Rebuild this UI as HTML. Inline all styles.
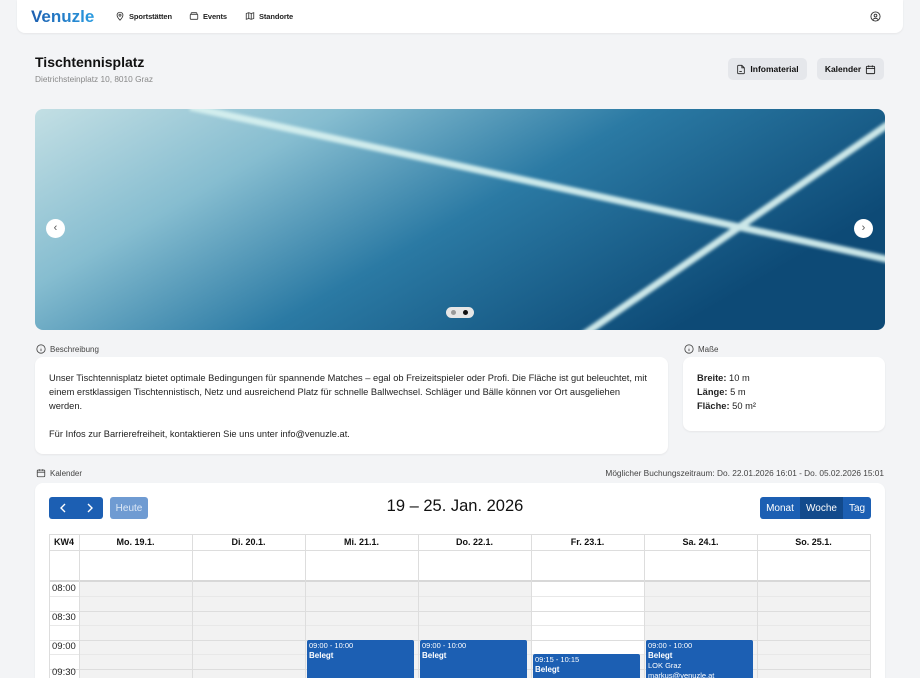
<!DOCTYPE html>
<html><head><meta charset="utf-8">
<style>
*{box-sizing:border-box;margin:0;padding:0}
html,body{width:920px;height:678px;overflow:hidden}
body{background:#f3f4f6;font-family:"Liberation Sans",sans-serif;color:#111;position:relative}
.abs{position:absolute}
.hdr{left:17px;top:0;width:886px;height:33px;background:#fff;border-radius:0 0 8px 8px;box-shadow:0 1px 2px rgba(0,0,0,.06)}
.logo{left:14px;top:7px;font-size:17px;font-weight:bold;background:linear-gradient(90deg,#1d5fb0,#2a9be0);-webkit-background-clip:text;color:transparent}
.nav{top:11px;font-size:7.5px;font-weight:bold;color:#222;display:flex;align-items:center;gap:4px;letter-spacing:-.1px}
.btn{background:#e5e7eb;border-radius:5px;font-size:8.5px;font-weight:bold;display:flex;align-items:center;justify-content:center;gap:4px;color:#111}
.lbl{font-size:8px;color:#444;display:flex;align-items:center;gap:4px}
.card{background:#fff;border-radius:8px;box-shadow:0 1px 2px rgba(0,0,0,.06)}
.p{font-size:9.3px;line-height:14px;color:#222}
.cb{background:#1c5fb3;color:#fff;font-size:10px;display:flex;align-items:center;justify-content:center}
.hl{position:absolute;left:0;width:821px;height:1px;background:#ddd}
.vl{position:absolute;top:0;width:1px;height:144px;background:#ddd}
.dh{position:absolute;top:0;height:16px;font-size:9px;font-weight:bold;text-align:center;line-height:16px}
.tm{position:absolute;left:3px;font-size:9.5px;color:#222}
.ev{position:absolute;background:#1c5fb3;color:#fff;border-radius:2px 2px 0 0;padding:1px 2px;font-size:7.5px;line-height:10px;width:107px;height:38px;overflow:hidden}
.ev b{font-size:8px;display:block}
</style></head><body>
<div class="abs hdr">
  <div class="abs logo">Venuzle</div>
  <div class="abs nav" style="left:98px"><svg width="10" height="10" viewBox="0 0 24 24" fill="none" stroke="#333" stroke-width="2"><path d="M12 22s7-7 7-12a7 7 0 0 0-14 0c0 5 7 12 7 12z"/><circle cx="12" cy="10" r="2.5"/></svg>Sportstätten</div>
  <div class="abs nav" style="left:172px"><svg width="10" height="10" viewBox="0 0 24 24" fill="none" stroke="#333" stroke-width="2"><rect x="3" y="8" width="18" height="12" rx="2"/><path d="M5 8V6a2 2 0 0 1 2-2h10a2 2 0 0 1 2 2v2"/></svg>Events</div>
  <div class="abs nav" style="left:228px"><svg width="10" height="10" viewBox="0 0 24 24" fill="none" stroke="#333" stroke-width="2"><path d="M3 6l6-2 6 2 6-2v14l-6 2-6-2-6 2z M9 4v14 M15 6v14"/></svg>Standorte</div>
  <svg class="abs" style="left:853px;top:11px" width="11" height="11" viewBox="0 0 24 24" fill="none" stroke="#333" stroke-width="2"><circle cx="12" cy="12" r="10"/><circle cx="12" cy="10" r="3"/><path d="M6.5 18.5a7 7 0 0 1 11 0"/></svg>
</div>

<div class="abs" style="left:35px;top:54px;font-size:14px;font-weight:bold">Tischtennisplatz</div>
<div class="abs" style="left:35px;top:74px;font-size:8.3px;color:#888">Dietrichsteinplatz 10, 8010 Graz</div>
<div class="abs btn" style="left:728px;top:58px;width:79px;height:22px"><svg width="10" height="11" viewBox="0 0 24 24" fill="none" stroke="#222" stroke-width="2"><path d="M14 2H6a2 2 0 0 0-2 2v16a2 2 0 0 0 2 2h12a2 2 0 0 0 2-2V8z M14 2v6h6 M8 17h6"/></svg>Infomaterial</div>
<div class="abs btn" style="left:817px;top:58px;width:67px;height:22px">Kalender<svg width="11" height="11" viewBox="0 0 24 24" fill="none" stroke="#222" stroke-width="2"><rect x="3" y="5" width="18" height="16" rx="2"/><path d="M3 10h18 M8 3v4 M16 3v4"/></svg></div>

<div class="abs" style="left:35px;top:109px;width:850px;height:221px;border-radius:8px;overflow:hidden">
<svg width="850" height="221" viewBox="0 0 850 221">
<defs><linearGradient id="g" x1="0" y1="0" x2="1" y2="0.45"><stop offset="0" stop-color="#c3dfe4"/><stop offset="0.3" stop-color="#86bdd0"/><stop offset="0.6" stop-color="#2b7aa4"/><stop offset="1" stop-color="#0d4a76"/></linearGradient>
<filter id="b"><feGaussianBlur stdDeviation="1.5"/></filter></defs>
<rect width="850" height="221" fill="url(#g)"/>
<g filter="url(#b)" stroke="#d6f0ef" stroke-width="7" fill="none" opacity=".95"><path d="M155 -2 L860 152"/><path d="M548 226 L858 12"/></g>
</svg>
<div class="abs" style="left:11px;top:110px;width:19px;height:19px;border-radius:50%;background:#fff;font-size:11px;text-align:center;line-height:18px;color:#555">‹</div>
<div class="abs" style="left:819px;top:110px;width:19px;height:19px;border-radius:50%;background:#fff;font-size:11px;text-align:center;line-height:18px;color:#555">›</div>
<div class="abs" style="left:411px;top:198px;width:28px;height:11px;border-radius:6px;background:#e6e6e6"><span class="abs" style="left:5px;top:3px;width:5px;height:5px;border-radius:50%;background:#999"></span><span class="abs" style="left:17px;top:3px;width:5px;height:5px;border-radius:50%;background:#111"></span></div>
</div>

<div class="abs lbl" style="left:36px;top:344px"><svg width="10" height="10" viewBox="0 0 24 24" fill="none" stroke="#444" stroke-width="2"><circle cx="12" cy="12" r="10"/><path d="M12 11v6 M12 7v.5"/></svg>Beschreibung</div>
<div class="abs lbl" style="left:684px;top:344px"><svg width="10" height="10" viewBox="0 0 24 24" fill="none" stroke="#444" stroke-width="2"><circle cx="12" cy="12" r="10"/><path d="M12 11v6 M12 7v.5"/></svg>Maße</div>
<div class="abs card" style="left:35px;top:357px;width:633px;height:97px;padding:14px 14px">
<div class="p" style="width:605px">Unser Tischtennisplatz bietet optimale Bedingungen für spannende Matches – egal ob Freizeitspieler oder Profi. Die Fläche ist gut beleuchtet, mit einem erstklassigen Tischtennistisch, Netz und ausreichend Platz für schnelle Ballwechsel. Schläger und Bälle können vor Ort ausgeliehen werden.<br><br>Für Infos zur Barrierefreiheit, kontaktieren Sie uns unter info@venuzle.at.</div></div>
<div class="abs card" style="left:683px;top:357px;width:202px;height:74px;padding:14px 14px">
<div class="p"><b>Breite:</b> 10 m<br><b>Länge:</b> 5 m<br><b>Fläche:</b> 50 m²</div></div>

<div class="abs lbl" style="left:36px;top:468px"><svg width="10" height="10" viewBox="0 0 24 24" fill="none" stroke="#444" stroke-width="2"><rect x="3" y="5" width="18" height="16" rx="2"/><path d="M3 10h18 M8 3v4 M16 3v4"/></svg>Kalender</div>
<div class="abs" style="right:36px;top:468px;font-size:8.3px;color:#444">Möglicher Buchungszeitraum: Do. 22.01.2026 16:01 - Do. 05.02.2026 15:01</div>

<div class="abs card" style="left:35px;top:483px;width:850px;height:195px;border-radius:8px 8px 0 0"></div>
<div class="abs cb" style="left:49px;top:497px;width:54px;height:22px;border-radius:3px;justify-content:space-around">
<svg width="8" height="10" viewBox="0 0 8 10" fill="none" stroke="#fff" stroke-width="1.4"><path d="M6 1L2 5l4 4"/></svg>
<svg width="8" height="10" viewBox="0 0 8 10" fill="none" stroke="#fff" stroke-width="1.4"><path d="M2 1l4 4-4 4"/></svg></div>
<div class="abs cb" style="left:110px;top:497px;width:38px;height:22px;border-radius:3px;background:#6f9bd2;color:#dde8f6">Heute</div>
<div class="abs" style="left:355px;top:497px;width:200px;text-align:center;font-size:16.5px">19 – 25. Jan. 2026</div>
<div class="abs" style="left:760px;top:497px;width:111px;height:22px;display:flex;border-radius:3px;overflow:hidden">
<div class="cb" style="width:40px">Monat</div><div class="cb" style="width:43px;background:#124a8c">Woche</div><div class="cb" style="width:28px">Tag</div></div>

<div class="abs" style="left:49px;top:534px;width:822px;height:144px;overflow:hidden">
  <div class="abs" style="left:30px;top:48px;width:791px;height:96px;background:#f2f2f2"></div>
  <div class="abs" style="left:483px;top:48px;width:113px;height:72px;background:#fff"></div>
  <div class="hl" style="top:0"></div><div class="hl" style="top:16px"></div><div class="hl" style="top:46px;height:2px;background:#d8d8d8"></div>
  <div class="hl" style="top:62px;background:#e8e8e8"></div><div class="hl" style="top:77px"></div>
  <div class="hl" style="top:91px;background:#e8e8e8"></div><div class="hl" style="top:106px"></div>
  <div class="hl" style="top:120px;background:#e8e8e8"></div><div class="hl" style="top:135px"></div>
  <div class="vl" style="left:0"></div><div class="vl" style="left:30px"></div><div class="vl" style="left:143px"></div><div class="vl" style="left:256px"></div><div class="vl" style="left:369px"></div><div class="vl" style="left:482px"></div><div class="vl" style="left:595px"></div><div class="vl" style="left:708px"></div><div class="vl" style="left:821px"></div>
  <div class="dh" style="left:0;width:30px">KW4</div>
  <div class="dh" style="left:30px;width:113px">Mo. 19.1.</div>
  <div class="dh" style="left:143px;width:113px">Di. 20.1.</div>
  <div class="dh" style="left:256px;width:113px">Mi. 21.1.</div>
  <div class="dh" style="left:369px;width:113px">Do. 22.1.</div>
  <div class="dh" style="left:482px;width:113px">Fr. 23.1.</div>
  <div class="dh" style="left:595px;width:113px">Sa. 24.1.</div>
  <div class="dh" style="left:708px;width:113px">So. 25.1.</div>
  <div class="tm" style="top:49px">08:00</div>
  <div class="tm" style="top:78px">08:30</div>
  <div class="tm" style="top:107px">09:00</div>
  <div class="tm" style="top:133px">09:30</div>
  <div class="ev" style="left:258px;top:106px">09:00 - 10:00<b>Belegt</b></div>
  <div class="ev" style="left:371px;top:106px">09:00 - 10:00<b>Belegt</b></div>
  <div class="ev" style="left:484px;top:120px;height:24px">09:15 - 10:15<b>Belegt</b></div>
  <div class="ev" style="left:597px;top:106px">09:00 - 10:00<b>Belegt</b>LOK Graz<br>markus@venuzle.at</div>
</div>
</body></html>
